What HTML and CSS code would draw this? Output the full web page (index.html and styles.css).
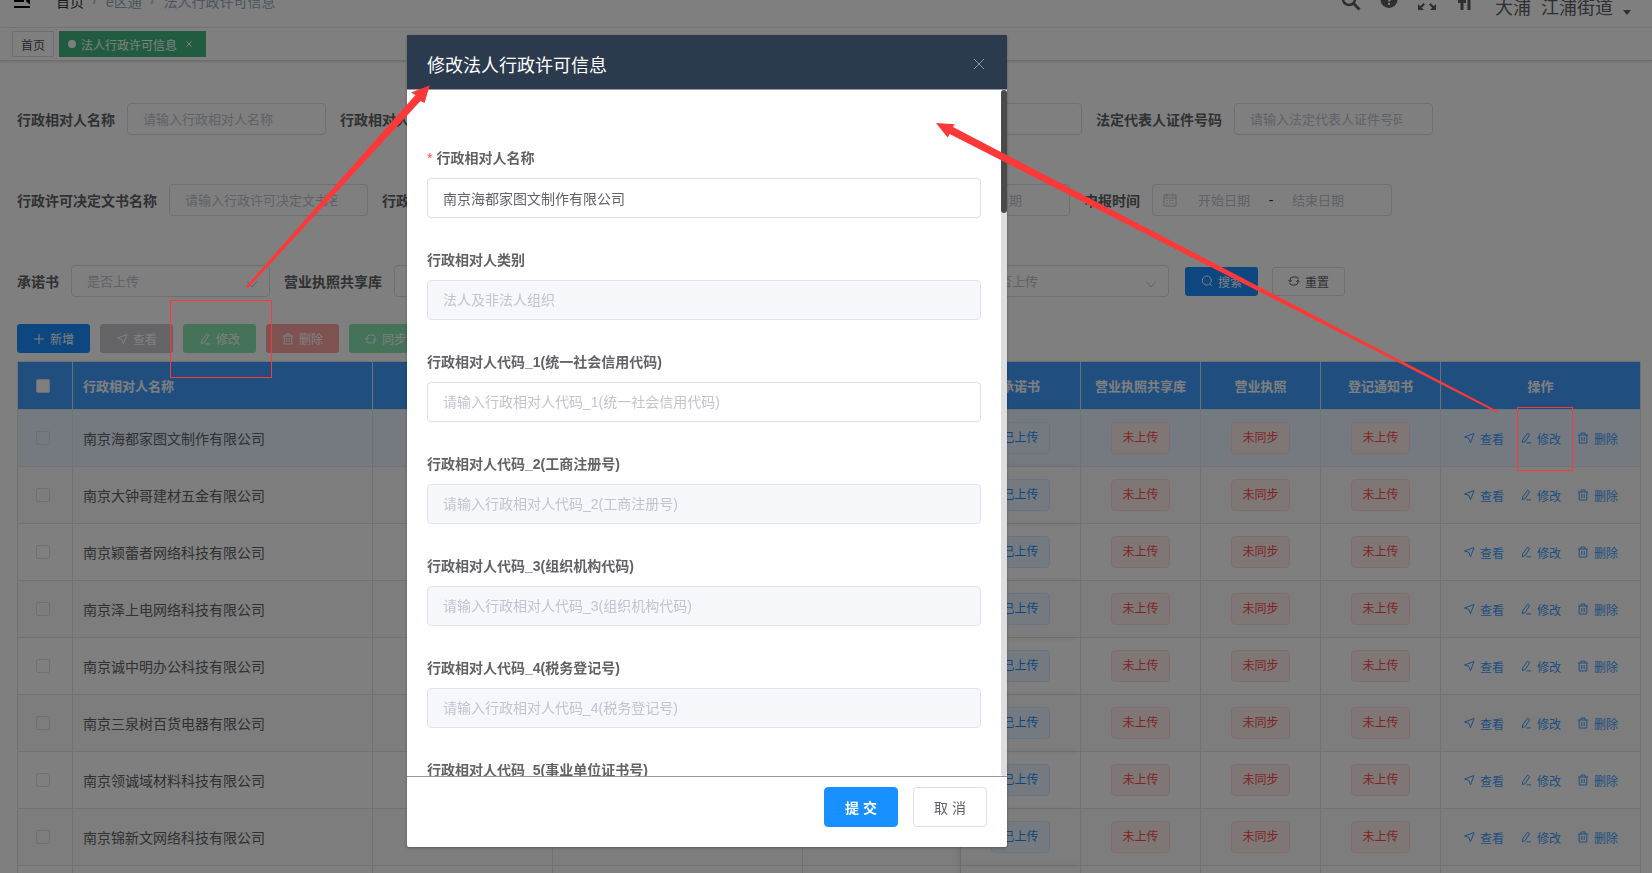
FILE: index.html
```html
<!DOCTYPE html>
<html lang="zh-CN">
<head>
<meta charset="UTF-8" />
<meta name="viewport" content="width=device-width, initial-scale=1" />
<title>法人行政许可信息</title>
<link rel="stylesheet" href="styles.css">
</head>
<body>

<!-- 图标 -->
<svg class="icon-defs" aria-hidden="true">
  <symbol id="i-plus" viewBox="0 0 12 12"><path d="M6 1v10M1 6h10"/></symbol>
  <symbol id="i-view" viewBox="0 0 12 12"><path d="M11 1.500 1.500 5 5.800 6.300 7.500 10.800z"/></symbol>
  <symbol id="i-edit" viewBox="0 0 12 12"><path d="M7.500 1.200 9.700 2.500 5.200 9.600 2.300 10.600 2.700 8zM6.500 10.900h4.500"/></symbol>
  <symbol id="i-delete" viewBox="0 0 12 12"><path d="M1 3h10M4 3V1h4v2M2.200 3v8h7.600V3M4.800 5v4M7.200 5v4"/></symbol>
  <symbol id="i-refresh" viewBox="0 0 12 12"><path d="M2 6.500V5a3 3 0 0 1 3-3h3a2.300 2.300 0 0 1 2.300 2.300M3.800 5.200 2 6.800.500 5M10 5.500V7a3 3 0 0 1-3 3H4a2.300 2.300 0 0 1-2.300-2.300M8.200 6.800 10 5.200 11.500 7"/></symbol>
  <symbol id="i-search" viewBox="0 0 12 12"><circle cx="5.800" cy="5.500" r="4.500"/><path d="m8.800 8.800 2 2.400"/></symbol>
  <symbol id="i-arrow" viewBox="0 0 12 12"><path d="m1 3.500 5 5.500 5-5.500"/></symbol>
  <symbol id="i-close" viewBox="0 0 12 12"><path d="m1 1 10 10M11 1 1 11"/></symbol>
  <symbol id="i-date" viewBox="0 0 14 14"><path d="M1 2h12v11H1zM1 5h12M4 .500v3M10 .500v3M3.500 7.500h1.500M6.300 7.500h1.500M9 7.500h1.500M3.500 10.300h1.500M6.300 10.300h1.500M9 10.300h1.500"/></symbol>
</svg>

<div class="app">
  <header class="navbar">
    <button class="hamburger" aria-label="菜单">
      <svg viewBox="0 0 16 14"><path d="M0 1h16M0 7h10M0 13h16" stroke="currentColor" stroke-width="2"/><path d="M11.500 7 16 3.500v7z" fill="currentColor"/></svg>
    </button>
    <nav class="breadcrumb">
      <a href="#" class="home">首页</a><span class="sep">/</span><a href="#">e区通</a><span class="sep">/</span><span>法人行政许可信息</span>
    </nav>
    <div class="right-menu">
      <button aria-label="搜索"><svg viewBox="0 0 20 20"><circle cx="8" cy="8" r="6" fill="none" stroke="currentColor" stroke-width="2.500"/><path d="m12.500 12.500 6 6" stroke="currentColor" stroke-width="3"/></svg></button>
      <button aria-label="帮助"><svg viewBox="0 0 20 20"><circle cx="10" cy="8.500" r="8.500" fill="currentColor"/><path d="M7.500 6.500c0-3.500 5.500-3.500 5.200 0-.2 1.800-2.600 1.800-2.600 4M10 12v2" fill="none" stroke="#fff" stroke-width="2"/></svg></button>
      <button aria-label="全屏"><svg viewBox="0 0 20 20"><path d="M1 1h6L5.300 2.700 8.500 6 7 7.500 3.700 4.200 1 7zM19 1v6l-2.700-2.800L13 7.500 11.500 6l3.200-3.300L13 1zM1 19v-6l2.200 2.200 3.300-3.200L8 13.500l-3.200 3.300L7 19zM19 19h-6l2.200-2.200-3.200-3.300 1.500-1.500 3.300 3.200L19 13z" fill="currentColor"/></svg></button>
      <button aria-label="字号"><svg viewBox="0 0 20 20"><path d="M3 9h8v3H8.500v7h-3v-7H3zM12.500 4h3v15h-3z" fill="currentColor"/></svg></button>
      <span class="user"><span>大浦</span><span>江浦街道</span><i class="caret"></i></span>
    </div>
  </header>

  <div class="tags-view">
    <a href="#" class="tag-item">首页</a>
    <a href="#" class="tag-item active"><i class="dot"></i>法人行政许可信息<svg class="icon"><use href="#i-close"/></svg></a>
  </div>

  <main class="main">
    <form class="search">
      <div class="search-row">
        <div class="item"><label for="s1">行政相对人名称</label><input id="s1" placeholder="请输入行政相对人名称"></div>
        <div class="item span-code"><label for="s2">行政相对人代码</label><input id="s2"></div>
        <div class="item"><label for="s3">法定代表人证件号码</label><input id="s3" placeholder="请输入法定代表人证件号码"></div>
      </div>
      <div class="search-row">
        <div class="item"><label for="s4">行政许可决定文书名称</label><input id="s4" placeholder="请输入行政许可决定文书名称"></div>
        <div class="item span-date"><label for="s5">行政许可决定日期</label>
          <div class="date-range">
            <svg class="icon"><use href="#i-date"/></svg>
            <input id="s5" placeholder="开始日期"><span>-</span><input placeholder="结束日期" aria-label="结束日期">
          </div>
        </div>
        <div class="item"><label for="s6">申报时间</label>
          <div class="date-range">
            <svg class="icon"><use href="#i-date"/></svg>
            <input id="s6" placeholder="开始日期"><span>-</span><input placeholder="结束日期" aria-label="结束日期">
          </div>
        </div>
      </div>
      <div class="search-row">
        <div class="item"><label for="s7">承诺书</label><div class="select"><select id="s7"><option>是否上传</option></select><svg class="icon"><use href="#i-arrow"/></svg></div></div>
        <div class="item"><label for="s8">营业执照共享库</label><div class="select"><select id="s8"><option>是否上传</option></select><svg class="icon"><use href="#i-arrow"/></svg></div></div>
        <div class="item"><label for="s9">营业执照</label><div class="select"><select id="s9"><option>是否同步</option></select><svg class="icon"><use href="#i-arrow"/></svg></div></div>
        <div class="item"><label for="s10">登记通知书</label><div class="select"><select id="s10"><option>是否上传</option></select><svg class="icon"><use href="#i-arrow"/></svg></div></div>
        <div class="search-btns">
          <button type="button" class="btn primary"><svg class="icon"><use href="#i-search"/></svg>搜索</button>
          <button type="button" class="btn plain"><svg class="icon"><use href="#i-refresh"/></svg>重置</button>
        </div>
      </div>
    </form>

    <div class="toolbar">
      <button class="btn primary"><svg class="icon"><use href="#i-plus"/></svg>新增</button>
      <button class="btn info" disabled><svg class="icon"><use href="#i-view"/></svg>查看</button>
      <button class="btn success" disabled><svg class="icon"><use href="#i-edit"/></svg>修改</button>
      <button class="btn danger" disabled><svg class="icon"><use href="#i-delete"/></svg>删除</button>
      <button class="btn success" disabled><svg class="icon"><use href="#i-refresh"/></svg>同步营业执照</button>
    </div>

    <table class="table">
      <colgroup>
        <col class="c-check"><col class="c-name"><col class="c-type"><col class="c-code"><col>
        <col class="c-state"><col class="c-state"><col class="c-state"><col class="c-state"><col class="c-op">
      </colgroup>
      <thead>
        <tr>
          <th><input type="checkbox" aria-label="全选"></th>
          <th class="left">行政相对人名称</th>
          <th></th><th></th><th></th>
          <th class="fixed">承诺书</th>
          <th>营业执照共享库</th>
          <th>营业执照</th>
          <th>登记通知书</th>
          <th>操作</th>
        </tr>
      </thead>
      <tbody id="rows"></tbody>
    </table>
  </main>
</div>

<!-- 修改弹窗 -->
<div class="mask">
  <section class="dialog" role="dialog" aria-labelledby="dialogTitle">
    <header class="dialog-header">
      <h2 id="dialogTitle">修改法人行政许可信息</h2>
      <button class="close" aria-label="关闭"><svg class="icon"><use href="#i-close"/></svg></button>
    </header>
    <div class="dialog-body">
      <div class="form-item required"><label for="f0">行政相对人名称</label><input id="f0" value="南京海都家图文制作有限公司"></div>
      <div class="form-item"><label for="f1">行政相对人类别</label><input id="f1" placeholder="法人及非法人组织" disabled></div>
      <div class="form-item"><label for="f2">行政相对人代码_1(统一社会信用代码)</label><input id="f2" placeholder="请输入行政相对人代码_1(统一社会信用代码)"></div>
      <div class="form-item"><label for="f3">行政相对人代码_2(工商注册号)</label><input id="f3" placeholder="请输入行政相对人代码_2(工商注册号)" disabled></div>
      <div class="form-item"><label for="f4">行政相对人代码_3(组织机构代码)</label><input id="f4" placeholder="请输入行政相对人代码_3(组织机构代码)" disabled></div>
      <div class="form-item"><label for="f5">行政相对人代码_4(税务登记号)</label><input id="f5" placeholder="请输入行政相对人代码_4(税务登记号)" disabled></div>
      <div class="form-item"><label for="f6">行政相对人代码_5(事业单位证书号)</label><input id="f6" disabled></div>
      <div class="scrollbar"><div class="thumb"></div></div>
    </div>
    <footer class="dialog-footer">
      <button class="btn-lg primary">提 交</button>
      <button class="btn-lg plain">取 消</button>
    </footer>
  </section>
</div>

<!-- 操作标注 -->
<svg class="marks" width="1652" height="873" viewBox="0 0 1652 873" aria-hidden="true">
  <rect x="170.500" y="300.500" width="101" height="77"/>
  <rect x="1517.500" y="407.500" width="55" height="63"/>
  <path d="M246 286.500 415.500 95 411 92.500 429.700 85.500 424.500 103 420.500 101 248 288z"/>
  <path d="M1496.500 412.500 949.600 134 947.600 137.500 936 123 954.800 124.300 953 127 1497.500 411z"/>
</svg>

<script>
  const names = [
    '南京海都家图文制作有限公司',
    '南京大钟哥建材五金有限公司',
    '南京颖蕾者网络科技有限公司',
    '南京泽上电网络科技有限公司',
    '南京诚中明办公科技有限公司',
    '南京三泉树百货电器有限公司',
    '南京领诚域材料科技有限公司',
    '南京锦新文网络科技有限公司',
    ''
  ];

  const op = (icon, text) =>
    `<button class="link"><svg class="icon"><use href="#i-${icon}"/></svg>${text}</button>`;

  document.getElementById('rows').innerHTML = names.map(name => `
    <tr>
      <td><input type="checkbox" aria-label="选择"></td>
      <td class="left">${name}</td>
      <td></td><td></td><td></td>
      <td class="fixed"><span class="tag blue">已上传</span></td>
      <td><span class="tag red">未上传</span></td>
      <td><span class="tag red">未同步</span></td>
      <td><span class="tag red">未上传</span></td>
      <td><div class="ops">${op('view', '查看')}${op('edit', '修改')}${op('delete', '删除')}</div></td>
    </tr>`).join('');
</script>

</body>
</html>
```
FILE: styles.css
```css
* {
  box-sizing: border-box;
}
body {
  margin: 0;
  height: 100vh;
  overflow: hidden;
  background: #fff;
  color: #606266;
  font-family: "Liberation Sans", "Noto Sans CJK SC", sans-serif;
  font-size: 14px;
}
button, input, select {
  font-family: inherit;
}
button {
  cursor: pointer;
}
a {
  color: inherit;
  text-decoration: none;
}
.icon-defs {
  display: none;
}
.icon {
  width: 12px;
  height: 12px;
  fill: none;
  stroke: currentColor;
  stroke-width: 1;
  flex: none;
}
.app {
  height: 100vh;
  overflow: hidden;
}

/* 顶部导航，已向上滚动一部分 */
.navbar {
  display: flex;
  align-items: center;
  height: 53px;
  margin-top: -25px;
  padding: 0 21px 0 14px;
  border-bottom: 1px solid #f0f0f0;
}
.navbar button {
  display: flex;
  padding: 0;
  border: none;
  background: none;
  color: inherit;
}
.navbar .hamburger {
  margin-right: 26px;
  color: #000;
}
.hamburger svg {
  width: 16px;
  height: 14px;
}
.breadcrumb {
  display: flex;
  color: #97a8be;
}
.breadcrumb .home {
  color: #303133;
}
.breadcrumb .sep {
  margin: 0 9px;
  font-weight: bold;
  color: #c0c4cc;
}
.right-menu {
  display: flex;
  align-items: center;
  gap: 18px;
  margin-left: auto;
  color: #5a5e66;
}
.right-menu svg {
  width: 20px;
  height: 20px;
}
.user {
  display: flex;
  align-items: center;
  gap: 10px;
  margin: 10px 0 0 2px;
  font-size: 18px;
}
.caret {
  margin-top: 12px;
  border: 4px solid transparent;
  border-top: 5px solid #5a5e66;
  border-bottom: none;
}

/* 页签 */
.tags-view {
  display: flex;
  gap: 5px;
  height: 33px;
  padding: 3px 12px;
  border-bottom: 1px solid #d8dce5;
  box-shadow: 0 1px 3px rgba(0, 0, 0, .12), 0 0 3px rgba(0, 0, 0, .04);
}
.tag-item {
  display: flex;
  align-items: center;
  height: 26px;
  padding: 0 8px;
  border: 1px solid #d8dce5;
  color: #495060;
  font-size: 12px;
}
.tag-item.active {
  padding-right: 13px;
  border-color: #42b983;
  background: #42b983;
  color: #fff;
}
.tag-item .icon {
  width: 6px;
  height: 6px;
  margin-left: 9px;
  stroke-width: 2;
}
.dot {
  width: 8px;
  height: 8px;
  margin-right: 5px;
  border-radius: 50%;
  background: #fff;
}

/* 搜索栏 */
.main {
  padding: 42px 11px 0 17px;
}
.search {
  display: flex;
  flex-direction: column;
  gap: 49px;
}
.search-row {
  display: flex;
  gap: 14px;
}
.item {
  display: flex;
  align-items: center;
  gap: 12px;
  flex: none;
}
.item label {
  font-weight: bold;
  white-space: nowrap;
}
.item > input, .select, .date-range {
  width: 199px;
  height: 32px;
  border: 1px solid #dcdfe6;
  border-radius: 4px;
  background: #fff;
}
.item > input {
  padding: 0 30px 0 15px;
  font-size: 13px;
}
.span-code {
  width: 742px;
}
.span-code > input {
  flex: 1;
}
.span-date {
  width: 688px;
}
.span-date label {
  flex: 1;
}
input::placeholder {
  color: #c0c4cc;
}
.select {
  position: relative;
}
.select select {
  width: 100%;
  height: 100%;
  padding: 0 15px;
  border: none;
  background: none;
  color: #c0c4cc;
  font-size: 13px;
  appearance: none;
}
.select .icon {
  position: absolute;
  right: 11px;
  top: 12px;
  color: #c0c4cc;
}
.date-range {
  display: flex;
  align-items: center;
  width: 240px;
  padding: 0 10px;
}
.date-range .icon {
  width: 14px;
  height: 14px;
  margin-right: 8px;
  color: #c0c4cc;
}
.date-range input {
  width: 78px;
  padding: 0;
  border: none;
  background: none;
  font-size: 13px;
  text-align: center;
}
.date-range span {
  width: 16px;
  text-align: center;
  color: #303133;
}
.search-btns {
  display: flex;
  align-items: center;
  gap: 14px;
  margin-left: 2px;
}

/* 按钮 */
.btn {
  display: flex;
  align-items: center;
  gap: 5px;
  height: 29px;
  padding: 0 15px;
  border: 1px solid transparent;
  border-radius: 3px;
  color: #fff;
  font-size: 12px;
  white-space: nowrap;
}
.primary {
  background: #1890ff;
  color: #fff;
}
.plain {
  background: #fff;
  border-color: #dcdfe6;
  color: #606266;
}
.info {
  background: #c8c9cc;
}
.success {
  background: #89e7b3;
}
.danger {
  background: #ffa4a4;
}
.toolbar {
  display: flex;
  gap: 10px;
  margin: 27px 0 8px;
}

/* 表格 */
.table {
  width: 100%;
  table-layout: fixed;
  border-spacing: 0;
  border-left: 1px solid #dfe6ec;
  border-top: 1px solid #dfe6ec;
}
.c-check { width: 55px; }
.c-name { width: 300px; }
.c-type { width: 180px; }
.c-code { width: 250px; }
.c-state { width: 120px; }
.c-op { width: 200px; }
.table th, .table td {
  padding: 0;
  border-right: 1px solid #dfe6ec;
  border-bottom: 1px solid #dfe6ec;
  text-align: center;
}
.table th {
  height: 48px;
  background: #409eff;
  color: #fff;
  font-size: 13px;
}
.table td {
  height: 57px;
}
.table .left {
  padding-left: 10px;
  text-align: left;
}
.table tbody tr:nth-child(even) {
  background: #fafafa;
}
.table tbody tr:first-child {
  background: #e8f4ff;
}
.table td.fixed {
  box-shadow: -3px 0 6px rgba(0, 0, 0, .08);
}
.table input {
  display: block;
  width: 14px;
  height: 14px;
  margin: 0 auto 0 18px;
  border: 1px solid #dcdfe6;
  border-radius: 2px;
  background: #fff;
  appearance: none;
}
.table tbody input {
  background: none;
}
.tag {
  display: inline-block;
  height: 32px;
  padding: 0 10px;
  border: 1px solid;
  border-radius: 4px;
  font-size: 12px;
  line-height: 30px;
  vertical-align: middle;
}
.tag.blue {
  border-color: #d1e9ff;
  background: #e8f4ff;
  color: #1890ff;
}
.tag.red {
  border-color: #ffdbdb;
  background: #ffeded;
  color: #ff4949;
}
.ops {
  display: flex;
  justify-content: center;
  gap: 16px;
}
.link {
  display: flex;
  align-items: center;
  gap: 5px;
  padding: 0;
  border: none;
  background: none;
  color: #409eff;
  font-size: 12px;
}

/* 弹窗 */
.mask {
  position: fixed;
  inset: 0;
  background: rgba(0, 0, 0, .5);
}
.dialog {
  width: 600px;
  margin: 35px 0 0 407px;
  border-radius: 2px;
  background: #fff;
  box-shadow: 0 1px 3px rgba(0, 0, 0, .3);
}
.dialog-header {
  display: flex;
  align-items: center;
  justify-content: space-between;
  height: 55px;
  padding: 4px 22px 0 20px;
  border-bottom: 1px solid #999;
  background: #2b3a4d;
}
.dialog-header h2 {
  margin: 0;
  color: #fff;
  font-size: 18px;
  font-weight: normal;
}
.close {
  display: flex;
  padding: 0;
  border: none;
  background: none;
  color: #909399;
}
.dialog-body {
  position: relative;
  height: calc(100vh - 187px);
  padding: 58px 26px 0 20px;
  overflow: hidden;
}
.form-item {
  display: flex;
  flex-direction: column;
  gap: 10px;
  margin-bottom: 32px;
}
.form-item label {
  font-weight: bold;
  line-height: 20px;
}
.form-item.required label::before {
  content: "*";
  margin-right: 4px;
  color: #ff4949;
  font-weight: normal;
}
.form-item input {
  height: 40px;
  padding: 0 15px;
  border: 1px solid #dcdfe6;
  border-radius: 4px;
  background: #fff;
  color: #606266;
  font-size: 14px;
}
.form-item input:disabled {
  border-color: #dfe4ed;
  background: #f5f7fa;
}
.scrollbar {
  position: absolute;
  top: 0;
  right: 0;
  bottom: 0;
  width: 6px;
  border-radius: 3px;
  background: #ddd;
}
.thumb {
  height: 123px;
  border-radius: 3px;
  background: #4a4a4a;
}
.dialog-footer {
  display: flex;
  justify-content: flex-end;
  gap: 15px;
  padding: 10px 20px 20px;
  border-top: 1px solid #999;
}
.btn-lg {
  width: 74px;
  height: 40px;
  border: 1px solid #dcdfe6;
  border-radius: 4px;
  font-size: 14px;
}
.btn-lg.primary {
  border-color: #1890ff;
  font-weight: bold;
}

/* 标注箭头和方框 */
.marks {
  position: fixed;
  top: 0;
  left: 0;
  pointer-events: none;
}
.marks rect {
  fill: none;
  stroke: #fd3838;
}
.marks path {
  fill: #fd3838;
}
```
